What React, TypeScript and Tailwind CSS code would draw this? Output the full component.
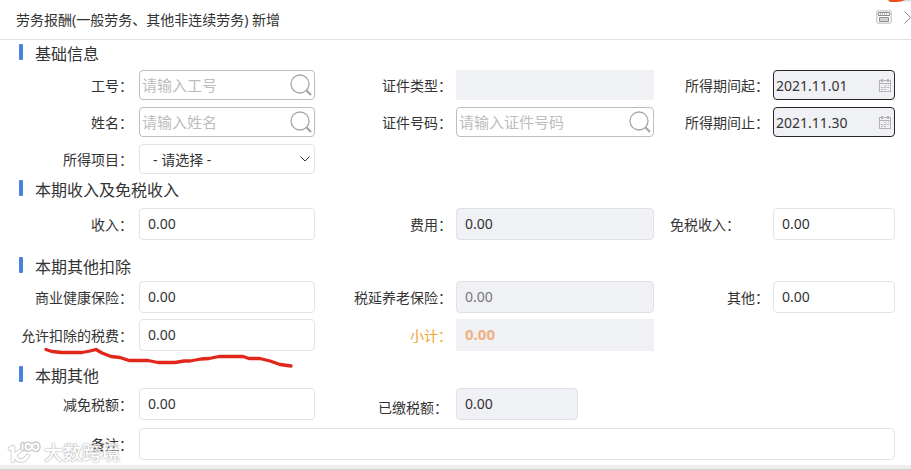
import { useId } from 'react';
import type { ReactNode } from 'react';

const ROW = 'grid grid-cols-[139px_minmax(0,176fr)_141px_minmax(0,198fr)_119px_minmax(0,122fr)] items-center';

const BOX = 'block w-full min-w-0 rounded-[4px] border outline-none';

const TONES = {
  plain: 'border-[#e2e3e6] bg-white text-[#333]',
  readonly: 'border-[#dfe1e6] bg-[#f0f1f5] text-[#333]',
  muted: 'border-[#dfe1e6] bg-[#f0f1f5] text-[#777]',
};

type FieldProps = {
  label: string;
  labelClass?: string;
  children: (id: string) => ReactNode;
};

function Field({ label, labelClass = 'pt-0.5 pr-1 text-right text-[#333]', children }: FieldProps) {
  const id = useId();
  return (
    <>
      <label htmlFor={id} className={`whitespace-nowrap leading-5 ${labelClass}`}>
        {label}
      </label>
      {children(id)}
    </>
  );
}

const FIRST = 'pt-0.5 pr-1.5 text-right text-[#333]';

function Amount({ id, tone = 'plain' }: { id: string; tone?: keyof typeof TONES }) {
  return (
    <input
      id={id}
      type="text"
      defaultValue="0.00"
      readOnly={tone !== 'plain'}
      className={`${BOX} h-8 px-2 pb-0.5 ${TONES[tone]}`}
    />
  );
}

function SearchBox({ id, placeholder }: { id: string; placeholder: string }) {
  return (
    <div className="flex h-[30px] min-w-0 items-center rounded-[4px] border border-[#bdbdbd] bg-white pl-0.5 pr-px">
      <input
        id={id}
        type="text"
        placeholder={placeholder}
        className="w-full min-w-0 flex-1 bg-transparent pt-0.5 text-[15px] outline-none placeholder:text-[#bdbdbd]"
      />
      <button type="button" aria-label="搜索" className="shrink-0">
        <svg className="block" width="24" height="24" viewBox="0 0 24 24" fill="none" stroke="#a6a6a6">
          <circle cx="11" cy="11" r="9" strokeWidth="1.3" />
          <path d="M17.3 17.300L22 22" strokeWidth="2.2" />
        </svg>
      </button>
    </div>
  );
}

function DateBox({ id, value }: { id: string; value: string }) {
  return (
    <div className="flex h-[30px] min-w-0 items-center rounded-[4px] border border-[#26262b] bg-[#f0f1f5] pl-0.5 pr-[3px]">
      <input id={id} type="text" defaultValue={value} className="w-full min-w-0 flex-1 bg-transparent pt-0.5 text-[#333] outline-none" />
      <button type="button" aria-label="选择日期" className="shrink-0">
        <svg className="block" width="12" height="13" viewBox="0 0 12 13" fill="#b3b3b3" shapeRendering="crispEdges">
          <path d="M0 1h12v12H0zM1 2v2h10V2zM1 5v7h10V5z" fillRule="evenodd" />
          <path d="M2 0h2v3H2zM8 0h2v3H8z" />
          <path d="M5 6h1v1H5zM7 6h1v1H7zM9 6h1v1H9zM2 8h2v1H2zM5 8h2v1H5zM8 8h2v1H8zM2 10h2v1H2zM5 10h2v1H5z" />
        </svg>
      </button>
    </div>
  );
}

function Heading({ children, className }: { children: ReactNode; className: string }) {
  return (
    <h2 className={`flex items-start gap-3 pl-[19px] text-base leading-5 text-[#333] ${className}`}>
      <span className="h-4 w-1 rounded-[1px] bg-[#4a82e0]" />
      {children}
    </h2>
  );
}

function RedMark() {
  return (
    <svg className="pointer-events-none absolute left-[40px] top-[340px]" width="260" height="32" viewBox="40 340 260 32" fill="none">
      <path
        d="M46 349.500L52 351.500L62 352.500H82L90 351L96 349.500L102 353L111 356.500L120 357.500L129 360.500H148L158 362.500H175L184 361H190L201 359L209 358.500L219 356.500H243L249 358.500H260L270 361L280 364.500L291 366"
        stroke="#e1261c"
        strokeWidth="3.300"
        strokeLinecap="round"
        strokeLinejoin="round"
      />
    </svg>
  );
}

const LOGO_K = 'M3 8.500L6 7V21M13 11L7 15.500M8.500 16.500C10.500 22 17.500 22 20.500 16';
const LOGO_LOOPS = 'M15.500 4V9.500M25 6.800C23 2.500 18.500 3 18.500 6.800S23 11 25 6.800S31.500 2.500 31.500 6.800S27 11 25 6.800';

function Watermark() {
  return (
    <div className="pointer-events-none absolute bottom-1 left-[7px] flex items-center gap-0.5">
      <svg width="35" height="26" viewBox="0 0 35 26" fill="none" strokeLinecap="round" strokeLinejoin="round">
        <g stroke="#cacaca" strokeWidth="4.600">
          <path d={LOGO_K} />
          <path d={LOGO_LOOPS} />
        </g>
        <g stroke="#fff">
          <path d={LOGO_K} strokeWidth="3" />
          <path d={LOGO_LOOPS} strokeWidth="1.800" />
        </g>
      </svg>
      <span className="text-[19px] font-medium leading-6 text-white opacity-80 [text-shadow:0_0_2px_#888,0_0_1px_#aaa]">大数跨境</span>
    </div>
  );
}

export default function App() {
  return (
    <div className="relative overflow-hidden bg-white font-['Noto_Sans','Noto_Sans_CJK_SC',sans-serif] text-sm text-[#333]">
      <header className="flex h-10 items-center justify-between border-b border-[#e1e1e1] pl-4">
        <h1 className="text-sm">劳务报酬(一般劳务、其他非连续劳务) 新增</h1>
        <div className="flex items-center gap-3">
          <button type="button" aria-label="键盘" className="mb-1.5">
            <svg width="16" height="14" viewBox="0 0 16 14" fill="none">
              <rect x=".75" y=".75" width="14.500" height="12.500" rx="2" stroke="#d2d2d2" strokeWidth="1.500" />
              <path d="M2.500 2.500h11v3h-11z" stroke="#8a8a8a" />
              <path d="M4 4h8" stroke="#777" strokeDasharray="1 1" />
              <path d="M3.500 7.500h9v4h-9z" fill="#d2d2d2" stroke="#8f8f8f" />
            </svg>
          </button>
          <button type="button" aria-label="关闭" className="mb-1">
            <svg className="block" width="7" height="13" viewBox="0 0 7 13" fill="none" stroke="#888">
              <path d="M.5.500L6.500 6.500L.5 12.500" />
            </svg>
          </button>
        </div>
      </header>
      <svg className="absolute right-0 top-0" width="23" height="3" viewBox="0 0 23 3">
        <path d="M12 0h11v1.500H12z" fill="#d5e0e8" />
        <path d="M0 0h17l-4 1.500L9 2H2z" fill="#e8501c" />
      </svg>

      <form className="pr-4">
        <Heading className="mb-1.5 mt-1">基础信息</Heading>
        <div className="flex flex-col gap-[7px]">
          <div className={ROW}>
            <Field label="工号：" labelClass={FIRST}>{(id) => <SearchBox id={id} placeholder="请输入工号" />}</Field>
            <Field label="证件类型：">
              {(id) => <input id={id} type="text" readOnly className="h-[30px] w-full min-w-0 bg-[#f0f1f5] px-2 outline-none" />}
            </Field>
            <Field label="所得期间起：">{(id) => <DateBox id={id} value="2021.11.01" />}</Field>
          </div>
          <div className={ROW}>
            <Field label="姓名：" labelClass={FIRST}>{(id) => <SearchBox id={id} placeholder="请输入姓名" />}</Field>
            <Field label="证件号码：">{(id) => <SearchBox id={id} placeholder="请输入证件号码" />}</Field>
            <Field label="所得期间止：">{(id) => <DateBox id={id} value="2021.11.30" />}</Field>
          </div>
          <div className={ROW}>
            <Field label="所得项目：" labelClass={FIRST}>
              {(id) => (
                <div className="grid min-w-0 items-center">
                  <select id={id} className={`${BOX} col-start-1 row-start-1 h-[30px] appearance-none px-[13px] pt-0.5 ${TONES.plain}`}>
                    <option>- 请选择 -</option>
                  </select>
                  <svg
                    className="pointer-events-none col-start-1 row-start-1 mr-[5px] justify-self-end"
                    width="10"
                    height="6"
                    viewBox="0 0 10 6"
                    fill="none"
                    stroke="#333"
                  >
                    <path d="M.5.500L5 5L9.500.500" />
                  </svg>
                </div>
              )}
            </Field>
          </div>
        </div>

        <Heading className="mb-2 mt-1.5">本期收入及免税收入</Heading>
        <div className={ROW}>
          <Field label="收入：" labelClass={FIRST}>{(id) => <Amount id={id} />}</Field>
          <Field label="费用：">{(id) => <Amount id={id} tone="readonly" />}</Field>
          <Field label="免税收入：" labelClass="pt-0.5 pl-4 text-left text-[#333]">{(id) => <Amount id={id} />}</Field>
        </div>

        <Heading className="mb-1 mt-[17px]">本期其他扣除</Heading>
        <div className="flex flex-col gap-1.5">
          <div className={ROW}>
            <Field label="商业健康保险：" labelClass={FIRST}>{(id) => <Amount id={id} />}</Field>
            <Field label="税延养老保险：">{(id) => <Amount id={id} tone="muted" />}</Field>
            <Field label="其他：">{(id) => <Amount id={id} />}</Field>
          </div>
          <div className={ROW}>
            <Field label="允许扣除的税费：" labelClass={FIRST}>{(id) => <Amount id={id} />}</Field>
            <Field label="小计：" labelClass="pt-0.5 pr-1 text-right text-[#eca42e]">
              {(id) => (
                <input
                  id={id}
                  type="text"
                  readOnly
                  defaultValue="0.00"
                  className="h-8 w-full min-w-0 bg-[#f0f1f5] px-[9px] pb-0.5 text-[15px] font-bold text-[#f2b080] outline-none"
                />
              )}
            </Field>
          </div>
        </div>

        <Heading className="mb-0.5 mt-[15px]">本期其他</Heading>
        <div className="flex flex-col gap-2">
          <div className={ROW}>
            <Field label="减免税额：" labelClass={FIRST}>{(id) => <Amount id={id} />}</Field>
            <Field label="已缴税额：" labelClass="self-end pb-0.5 pr-2 text-right text-[#333]">
              {(id) => (
                <div className="w-8/13">
                  <Amount id={id} tone="readonly" />
                </div>
              )}
            </Field>
          </div>
          <div className="grid grid-cols-[139px_minmax(0,1fr)] items-center">
            <Field label="备注：" labelClass={FIRST}>
              {(id) => <input id={id} type="text" className={`${BOX} h-8 px-2 ${TONES.plain}`} />}
            </Field>
          </div>
        </div>
      </form>

      <footer className="mt-[5px] h-[5px] border-b border-[#cfcfcf] bg-[#ededee]" />
      <RedMark />
      <Watermark />
    </div>
  );
}
